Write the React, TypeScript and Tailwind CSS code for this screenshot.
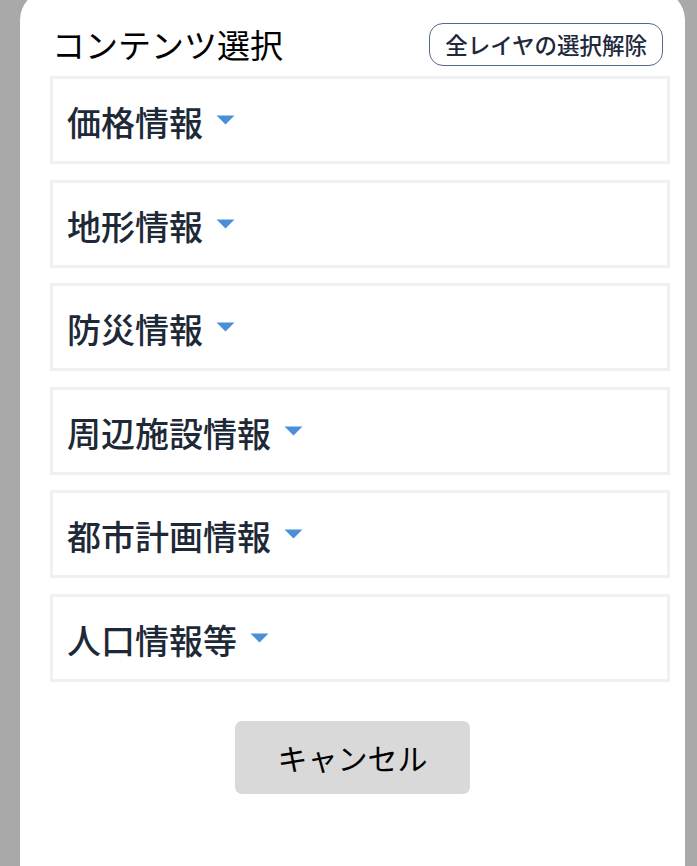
import React from "react";

const items = ["価格情報", "地形情報", "防災情報", "周辺施設情報", "都市計画情報", "人口情報等"];

function Caret() {
  return (
    <svg width="19" height="10" viewBox="0 0 19 10" className="ml-[13px] shrink-0">
      <path d="M0.5 0.5 L18.5 0.5 L9.5 9.5 Z" fill="#4a90d9" />
    </svg>
  );
}

export default function App() {
  return (
    <div
      className="w-full h-[866px] overflow-hidden bg-[#a9a9a9]"
      style={{ fontFamily: '"Noto Sans CJK JP", "Noto Sans", sans-serif' }}
    >
      <div className="ml-[20px] mt-[-10px] w-[665px] h-[900px] bg-white rounded-t-[30px] pt-[33px]">
        <div className="flex items-center justify-between pl-[32px] pr-[22px] h-[43px]">
          <div className="text-[33px] leading-none text-black">コンテンツ選択</div>
          <button className="h-[43px] px-[15px] border-[1.5px] border-[#56698a] rounded-[14px] text-[22.5px] leading-none font-medium text-[#1e293b] bg-white">
            全レイヤの選択解除
          </button>
        </div>
        <div className="mt-[10px] ml-[30px] mr-[15px] flex flex-col gap-[15.6px]">
          {items.map((t) => (
            <div
              key={t}
              className="h-[88px] border-[3px] border-[#f0f0f0] flex items-center pl-[14px]"
            >
              <span className="text-[34px] leading-none font-medium text-[#1e2937] pt-[4px]">{t}</span>
              <Caret />
            </div>
          ))}
        </div>
        <div className="flex justify-center mt-[39px]">
          <button className="w-[235px] h-[73px] bg-[#d9d9d9] rounded-[7px] text-[30px] leading-none text-black">
            キャンセル
          </button>
        </div>
      </div>
    </div>
  );
}
